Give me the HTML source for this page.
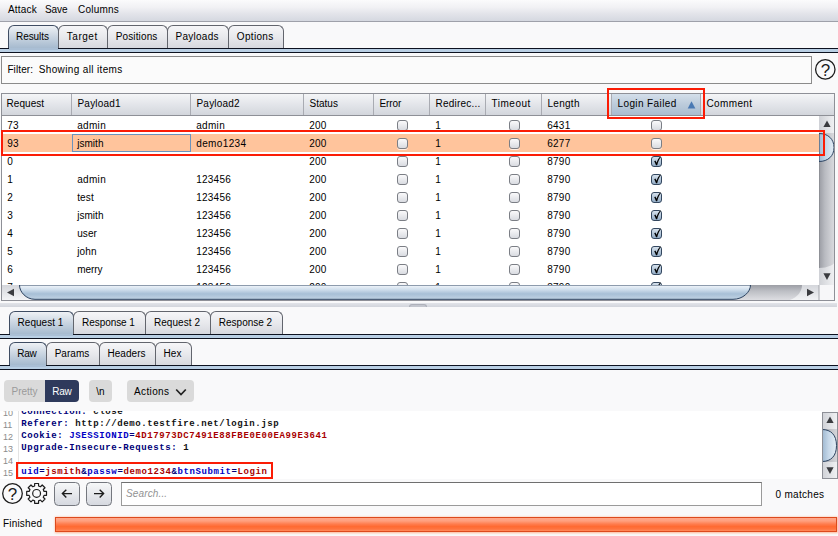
<!DOCTYPE html>
<html><head><meta charset="utf-8"><title>Intruder attack</title>
<style>
*{box-sizing:border-box;margin:0;padding:0}
html,body{width:838px;height:536px;overflow:hidden;background:#f9f9fa;font-family:"Liberation Sans",Arial,sans-serif;font-size:10px;color:#000}
body{position:relative}
.a{position:absolute}
#menubar{left:0;top:0;width:838px;height:22px;background:linear-gradient(#fbfbfc 0%,#f1f1f4 35%,#e3e4ea 65%,#d5d8e0 100%);border-bottom:1px solid #9fa1aa}
#menubar>span{position:absolute;top:4px}
.tab{position:absolute;height:24px;border:1px solid #62656d;border-bottom:none;border-radius:6px 6px 0 0;background:linear-gradient(#f6f6f8 0%,#e7e8ec 50%,#d5d7dd 100%);text-align:center;line-height:22px;white-space:nowrap;padding-right:2px}
.tab.sel{height:24px;background:linear-gradient(#eef1f5 0%,#cbd6e2 45%,#a3b8cd 100%);border-color:#3f4d63}
.tl{position:absolute;left:0;width:838px;height:5px;background:#b9cfe4;border-top:1px solid #0d1220;border-bottom:1px solid #0d1220}
#filter{left:1px;top:56px;width:811px;height:28px;border:1px solid #8b8b8b;background:#fbfbfb;line-height:26px;padding-left:5.4px}
#thead{left:1px;top:93px;width:834px;height:23px;border:1px solid #8e9097;background:linear-gradient(#f4f5f7 0%,#e3e5ea 50%,#d3d6dc 100%)}
.th{position:absolute;top:0;height:21px;line-height:20px;padding-left:5.5px;border-left:1px solid #a9abb2;white-space:nowrap;overflow:hidden}
.th.sorted{background:linear-gradient(#d4dfea 0%,#bccbdb 50%,#a9bcd0 100%)}
#tbody{left:1px;top:116px;width:834px;height:185px;border:1px solid #8e9097;border-top:none;background:#fff;overflow:hidden}
.tr{position:absolute;left:0;width:817px;height:18px;line-height:19px}
.tr.sel{background:#ffc49c}
.td{position:absolute;top:0;height:18px;white-space:nowrap}
.cb{position:absolute;top:4px;width:11px;height:11px;border:1px solid #7b7e85;border-radius:3px;background:linear-gradient(#fafafb,#d9dbe1);box-shadow:0 1px 0 rgba(255,255,255,.7)}
.cb.on{border-color:#33475f;background:linear-gradient(#d6e1ec,#93adc7)}
.cb.on svg{position:absolute;left:0;top:-1px}
.red{position:absolute;border:2.4px solid #fb1c05}
.ln{position:absolute;left:0;height:12px;line-height:12px;white-space:pre;font-family:"Liberation Mono","Courier New",monospace;font-size:10px}
.ln .no{position:absolute;left:3px;top:0.5px;color:#8c8c8c;font-size:9px;font-family:"Liberation Sans",Arial,sans-serif}
.ln .tx{position:absolute;left:21.3px;top:0.3px;font-size:9px;letter-spacing:0.6px;font-weight:bold;color:#111}
.ln b{font-weight:bold}
.ln b.n{color:#000078}.ln b.k{color:#0000c4}.ln b.v{color:#a80000}
</style></head><body>
<div id="menubar" class="a"><span style="left:8px"><span style="letter-spacing:0.188px">Attac</span>k</span><span style="left:45px"><span style="letter-spacing:-0.097px">Sav</span>e</span><span style="left:78px"><span style="letter-spacing:0.215px">Column</span>s</span></div>
<div class="tab sel" style="left:8px;top:25px;width:51px"><span style="letter-spacing:-0.073px">Result</span>s</div>
<div class="tab" style="left:58px;top:25px;width:50px"><span style="letter-spacing:0.542px">Targe</span>t</div>
<div class="tab" style="left:107px;top:25px;width:61px"><span style="letter-spacing:0.140px">Position</span>s</div>
<div class="tab" style="left:167px;top:25px;width:62px"><span style="letter-spacing:0.251px">Payload</span>s</div>
<div class="tab" style="left:228px;top:25px;width:56px"><span style="letter-spacing:0.307px">Option</span>s</div>
<div class="tl" style="top:48px"></div>
<div class="a" style="left:9px;top:48px;width:49px;height:2px;background:#aabfd5"></div>
<div id="filter" class="a"><span style="letter-spacing:0.117px">Filter</span>:&nbsp;&nbsp;<span style="letter-spacing:0.362px">Showing all item</span>s</div>
<svg class="a" style="left:813px;top:57px" width="25" height="25" viewBox="0 0 25 25"><circle cx="12.3" cy="12.4" r="9.7" fill="none" stroke="#1c1c1c" stroke-width="1.3"/><text x="12.4" y="18.7" text-anchor="middle" font-family="Liberation Sans,sans-serif" font-size="17" fill="#1c1c1c">?</text></svg>
<div id="thead" class="a">
<div class="th" style="border-left:none;left:-1px;width:70px"><span style="letter-spacing:0.058px">Reques</span>t</div>
<div class="th" style="left:69px;width:119px"><span style="letter-spacing:0.200px">Payload</span>1</div>
<div class="th" style="left:188px;width:113px"><span style="letter-spacing:0.200px">Payload</span>2</div>
<div class="th" style="left:301px;width:70px"><span style="letter-spacing:0.010px">Statu</span>s</div>
<div class="th" style="left:371px;width:56px"><span style="letter-spacing:-0.130px">Erro</span>r</div>
<div class="th" style="left:427px;width:56px"><span style="letter-spacing:0.223px">Redirec..</span>.</div>
<div class="th" style="left:483px;width:56px"><span style="letter-spacing:0.508px">Timeou</span>t</div>
<div class="th" style="left:539px;width:70px"><span style="letter-spacing:0.282px">Lengt</span>h</div>
<div class="th sorted" style="left:609px;width:89px"><span style="letter-spacing:0.393px">Login Faile</span>d</div>
<div class="th" style="left:698px;width:134px"><span style="letter-spacing:0.358px">Commen</span>t</div>
<svg class="a" style="left:685px;top:6px" width="12" height="10" viewBox="0 0 12 10"><path d="M4.5 1.2 L8.4 8.4 L0.7 8.4 Z" fill="#4a79b3"/></svg>
</div>
<div id="tbody" class="a">
<div class="tr" style="top:0px">
<span class="td" style="left:5.2px"><span style="letter-spacing:0.263px">7</span>3</span>
<span class="td" style="left:75.2px"><span style="letter-spacing:0.315px">admi</span>n</span>
<span class="td" style="left:194.2px"><span style="letter-spacing:0.315px">admi</span>n</span>
<span class="td" style="left:307.2px"><span style="letter-spacing:0.263px">20</span>0</span>
<span class="td" style="left:433.2px">1</span>
<span class="td" style="left:545.2px"><span style="letter-spacing:0.263px">643</span>1</span>
<span class="cb" style="left:394.8px"></span>
<span class="cb" style="left:506.79999999999995px"></span>
<span class="cb" style="left:649.1px"></span>
</div>
<div class="tr sel" style="top:18px">
<span class="td" style="left:5.2px"><span style="letter-spacing:0.263px">9</span>3</span>
<span class="td" style="left:75.2px"><span style="letter-spacing:0.028px">jsmit</span>h</span>
<span class="td" style="left:194.2px"><span style="letter-spacing:0.377px">demo123</span>4</span>
<span class="td" style="left:307.2px"><span style="letter-spacing:0.263px">20</span>0</span>
<span class="td" style="left:433.2px">1</span>
<span class="td" style="left:545.2px"><span style="letter-spacing:0.263px">627</span>7</span>
<span class="cb" style="left:394.8px"></span>
<span class="cb" style="left:506.79999999999995px"></span>
<span class="cb" style="left:649.1px"></span>
</div>
<div class="tr" style="top:36px">
<span class="td" style="left:5.2px">0</span>
<span class="td" style="left:307.2px"><span style="letter-spacing:0.263px">20</span>0</span>
<span class="td" style="left:433.2px">1</span>
<span class="td" style="left:545.2px"><span style="letter-spacing:0.263px">879</span>0</span>
<span class="cb" style="left:394.8px"></span>
<span class="cb" style="left:506.79999999999995px"></span>
<span class="cb on" style="left:649.1px"><svg width="11" height="11" viewBox="0 0 11 11"><path d="M2.2 5.2 L3.4 4.6 L4.6 6.8 C5.2 4.4 6.4 2.2 8.2 0.4 L8.8 0.8 C7.2 3.2 6 6 5.2 9.2 L4 9.2 C3.4 7.6 2.8 6.4 2.2 5.2 Z" fill="#000"/></svg></span>
</div>
<div class="tr" style="top:54px">
<span class="td" style="left:5.2px">1</span>
<span class="td" style="left:75.2px"><span style="letter-spacing:0.315px">admi</span>n</span>
<span class="td" style="left:194.2px"><span style="letter-spacing:0.246px">12345</span>6</span>
<span class="td" style="left:307.2px"><span style="letter-spacing:0.263px">20</span>0</span>
<span class="td" style="left:433.2px">1</span>
<span class="td" style="left:545.2px"><span style="letter-spacing:0.263px">879</span>0</span>
<span class="cb" style="left:394.8px"></span>
<span class="cb" style="left:506.79999999999995px"></span>
<span class="cb on" style="left:649.1px"><svg width="11" height="11" viewBox="0 0 11 11"><path d="M2.2 5.2 L3.4 4.6 L4.6 6.8 C5.2 4.4 6.4 2.2 8.2 0.4 L8.8 0.8 C7.2 3.2 6 6 5.2 9.2 L4 9.2 C3.4 7.6 2.8 6.4 2.2 5.2 Z" fill="#000"/></svg></span>
</div>
<div class="tr" style="top:72px">
<span class="td" style="left:5.2px">2</span>
<span class="td" style="left:75.2px"><span style="letter-spacing:0.132px">tes</span>t</span>
<span class="td" style="left:194.2px"><span style="letter-spacing:0.246px">12345</span>6</span>
<span class="td" style="left:307.2px"><span style="letter-spacing:0.263px">20</span>0</span>
<span class="td" style="left:433.2px">1</span>
<span class="td" style="left:545.2px"><span style="letter-spacing:0.263px">879</span>0</span>
<span class="cb" style="left:394.8px"></span>
<span class="cb" style="left:506.79999999999995px"></span>
<span class="cb on" style="left:649.1px"><svg width="11" height="11" viewBox="0 0 11 11"><path d="M2.2 5.2 L3.4 4.6 L4.6 6.8 C5.2 4.4 6.4 2.2 8.2 0.4 L8.8 0.8 C7.2 3.2 6 6 5.2 9.2 L4 9.2 C3.4 7.6 2.8 6.4 2.2 5.2 Z" fill="#000"/></svg></span>
</div>
<div class="tr" style="top:90px">
<span class="td" style="left:5.2px">3</span>
<span class="td" style="left:75.2px"><span style="letter-spacing:0.028px">jsmit</span>h</span>
<span class="td" style="left:194.2px"><span style="letter-spacing:0.246px">12345</span>6</span>
<span class="td" style="left:307.2px"><span style="letter-spacing:0.263px">20</span>0</span>
<span class="td" style="left:433.2px">1</span>
<span class="td" style="left:545.2px"><span style="letter-spacing:0.263px">879</span>0</span>
<span class="cb" style="left:394.8px"></span>
<span class="cb" style="left:506.79999999999995px"></span>
<span class="cb on" style="left:649.1px"><svg width="11" height="11" viewBox="0 0 11 11"><path d="M2.2 5.2 L3.4 4.6 L4.6 6.8 C5.2 4.4 6.4 2.2 8.2 0.4 L8.8 0.8 C7.2 3.2 6 6 5.2 9.2 L4 9.2 C3.4 7.6 2.8 6.4 2.2 5.2 Z" fill="#000"/></svg></span>
</div>
<div class="tr" style="top:108px">
<span class="td" style="left:5.2px">4</span>
<span class="td" style="left:75.2px"><span style="letter-spacing:0.082px">use</span>r</span>
<span class="td" style="left:194.2px"><span style="letter-spacing:0.246px">12345</span>6</span>
<span class="td" style="left:307.2px"><span style="letter-spacing:0.263px">20</span>0</span>
<span class="td" style="left:433.2px">1</span>
<span class="td" style="left:545.2px"><span style="letter-spacing:0.263px">879</span>0</span>
<span class="cb" style="left:394.8px"></span>
<span class="cb" style="left:506.79999999999995px"></span>
<span class="cb on" style="left:649.1px"><svg width="11" height="11" viewBox="0 0 11 11"><path d="M2.2 5.2 L3.4 4.6 L4.6 6.8 C5.2 4.4 6.4 2.2 8.2 0.4 L8.8 0.8 C7.2 3.2 6 6 5.2 9.2 L4 9.2 C3.4 7.6 2.8 6.4 2.2 5.2 Z" fill="#000"/></svg></span>
</div>
<div class="tr" style="top:126px">
<span class="td" style="left:5.2px">5</span>
<span class="td" style="left:75.2px"><span style="letter-spacing:0.164px">joh</span>n</span>
<span class="td" style="left:194.2px"><span style="letter-spacing:0.246px">12345</span>6</span>
<span class="td" style="left:307.2px"><span style="letter-spacing:0.263px">20</span>0</span>
<span class="td" style="left:433.2px">1</span>
<span class="td" style="left:545.2px"><span style="letter-spacing:0.263px">879</span>0</span>
<span class="cb" style="left:394.8px"></span>
<span class="cb" style="left:506.79999999999995px"></span>
<span class="cb on" style="left:649.1px"><svg width="11" height="11" viewBox="0 0 11 11"><path d="M2.2 5.2 L3.4 4.6 L4.6 6.8 C5.2 4.4 6.4 2.2 8.2 0.4 L8.8 0.8 C7.2 3.2 6 6 5.2 9.2 L4 9.2 C3.4 7.6 2.8 6.4 2.2 5.2 Z" fill="#000"/></svg></span>
</div>
<div class="tr" style="top:144px">
<span class="td" style="left:5.2px">6</span>
<span class="td" style="left:75.2px"><span style="letter-spacing:-0.066px">merr</span>y</span>
<span class="td" style="left:194.2px"><span style="letter-spacing:0.246px">12345</span>6</span>
<span class="td" style="left:307.2px"><span style="letter-spacing:0.263px">20</span>0</span>
<span class="td" style="left:433.2px">1</span>
<span class="td" style="left:545.2px"><span style="letter-spacing:0.263px">879</span>0</span>
<span class="cb" style="left:394.8px"></span>
<span class="cb" style="left:506.79999999999995px"></span>
<span class="cb on" style="left:649.1px"><svg width="11" height="11" viewBox="0 0 11 11"><path d="M2.2 5.2 L3.4 4.6 L4.6 6.8 C5.2 4.4 6.4 2.2 8.2 0.4 L8.8 0.8 C7.2 3.2 6 6 5.2 9.2 L4 9.2 C3.4 7.6 2.8 6.4 2.2 5.2 Z" fill="#000"/></svg></span>
</div>
<div class="tr" style="top:162px">
<span class="td" style="left:5.2px">7</span>
<span class="td" style="left:194.2px"><span style="letter-spacing:0.246px">12345</span>6</span>
<span class="td" style="left:307.2px"><span style="letter-spacing:0.263px">20</span>0</span>
<span class="td" style="left:433.2px">1</span>
<span class="td" style="left:545.2px"><span style="letter-spacing:0.263px">879</span>0</span>
<span class="cb" style="left:394.8px"></span>
<span class="cb" style="left:506.79999999999995px"></span>
<span class="cb on" style="left:649.1px"><svg width="11" height="11" viewBox="0 0 11 11"><path d="M2.2 5.2 L3.4 4.6 L4.6 6.8 C5.2 4.4 6.4 2.2 8.2 0.4 L8.8 0.8 C7.2 3.2 6 6 5.2 9.2 L4 9.2 C3.4 7.6 2.8 6.4 2.2 5.2 Z" fill="#000"/></svg></span>
</div>
</div>

<div class="a" id="vsb" style="left:819px;top:116px;width:15px;height:169px;background:linear-gradient(90deg,#9fa1a8 0%,#b9bbc1 35%,#d9dade 100%);border-left:1px solid #8f9197"></div>
<svg class="a" style="left:819px;top:116px" width="15" height="169" viewBox="0 0 15 169" preserveAspectRatio="none">
 <defs>
  <linearGradient id="btnv" x1="0" x2="1" y1="0" y2="0"><stop offset="0" stop-color="#cfd1d6"/><stop offset="1" stop-color="#f2f3f5"/></linearGradient>
  <linearGradient id="thv" x1="0" x2="1" y1="0" y2="0"><stop offset="0" stop-color="#9db7d0"/><stop offset=".45" stop-color="#c5d7e8"/><stop offset="1" stop-color="#e4eef6"/></linearGradient>
 </defs>
 <path d="M0 0 H16 V17 H0 Z" fill="url(#btnv)"/>
 <path d="M8 4.5 L11.6 11 L4.4 11 Z" fill="#3a3b3f"/>
 <path d="M0 169 H16 V144.5 A16 7.5 0 0 1 0 152 Z" fill="url(#btnv)"/>
 <path d="M8 164 L11.6 157.2 L4.4 157.2 Z" fill="#3a3b3f"/>
 <path d="M0 17.5 C9 17.5 15 23 15 31.5 C15 40 9 45.5 0 45.5 Z" fill="url(#thv)" stroke="#2c4361" stroke-width="1"/>
</svg>
<div class="a" id="hsb" style="left:2px;top:285px;width:817px;height:15px;background:linear-gradient(#9c9ea5 0%,#bcbec4 40%,#dddee2 100%)"></div>
<svg class="a" style="left:2px;top:285px" width="833" height="15" viewBox="0 0 833 15">
 <defs>
  <linearGradient id="btnh" x1="0" x2="0" y1="0" y2="1"><stop offset="0" stop-color="#d4d6db"/><stop offset="1" stop-color="#f3f4f6"/></linearGradient>
  <linearGradient id="thh" x1="0" x2="0" y1="0" y2="1"><stop offset="0" stop-color="#f3f7fb"/><stop offset=".32" stop-color="#cfdeec"/><stop offset=".62" stop-color="#a7bfd6"/><stop offset="1" stop-color="#c0d3e4"/></linearGradient>
 </defs>
 <path d="M0 0 H17 C17 6 22 12 30 15 H0 Z" fill="url(#btnh)"/>
 <path d="M5 7.5 L12 3.8 L12 11.2 Z" fill="#3a3b3f"/>
 <path d="M817 0 H800 C800 6 796 12 788 15 H817 Z" fill="url(#btnh)"/>
 <path d="M812 7.5 L805 3.8 L805 11.2 Z" fill="#3a3b3f"/>
 <path d="M17.5 0 C17.5 7 24 14.3 33 14.3 H731 C741 14.3 748.5 7 748.5 0 Z" fill="url(#thh)" stroke="#2c4361" stroke-width="1"/>
 <rect x="817" y="0" width="15" height="15" fill="#f7f7f9"/>
 <path d="M817 0 V15" stroke="#a5a7ad" stroke-width="1"/>
</svg>
<div class="a" style="left:0;top:303px;width:837px;height:4px;background:linear-gradient(#e2e4e9,#d2d5dc)"></div>
<div class="a" style="left:409px;top:303.5px;width:18px;height:3.5px;background:#c3c6ce;border:1px solid #aeb1ba;border-bottom:none;border-radius:3px 3px 0 0"></div>

<div class="red" style="left:607px;top:87.5px;width:98px;height:31px"></div>
<div class="red" style="left:1px;top:130px;width:824px;height:25.6px"></div>
<div class="a" style="left:72px;top:134px;width:119px;height:18px;border:1px solid #6b93bd"></div>
<div class="tab sel" style="left:9px;top:311px;width:65px"><span style="letter-spacing:0.026px">Request </span>1</div>
<div class="tab" style="left:73px;top:311px;width:73px"><span style="letter-spacing:-0.063px">Response </span>1</div>
<div class="tab" style="left:145px;top:311px;width:66px"><span style="letter-spacing:0.076px">Request </span>2</div>
<div class="tab" style="left:210px;top:311px;width:73px"><span style="letter-spacing:-0.008px">Response </span>2</div>
<div class="tl" style="top:334px"></div>
<div class="a" style="left:10px;top:334px;width:63px;height:2px;background:#aabfd5"></div>
<div class="tab sel" style="left:9px;top:342px;width:38px"><span style="letter-spacing:-0.215px">Ra</span>w</div>
<div class="tab" style="left:46px;top:342px;width:54px"><span style="letter-spacing:0.050px">Param</span>s</div>
<div class="tab" style="left:99px;top:342px;width:57px"><span style="letter-spacing:0.033px">Header</span>s</div>
<div class="tab" style="left:155px;top:342px;width:37px"><span style="letter-spacing:0.043px">He</span>x</div>
<div class="tl" style="top:365px"></div>
<div class="a" style="left:10px;top:365px;width:36px;height:2px;background:#aabfd5"></div>

<div class="a" style="left:4px;top:380px;width:41px;height:22px;background:#dadada;border-radius:4px 0 0 4px;color:#9a9a9a;text-align:center;line-height:23.5px"><span style="letter-spacing:-0.024px">Prett</span>y</div>
<div class="a" style="left:45px;top:380px;width:34px;height:22px;background:#2e3a5c;border-radius:0 4px 4px 0;color:#fff;text-align:center;line-height:23.5px"><span style="letter-spacing:-0.215px">Ra</span>w</div>
<div class="a" style="left:89px;top:380px;width:23px;height:22px;background:#dadada;border-radius:4px;text-align:center;line-height:23.5px">\n</div>
<div class="a" style="left:127px;top:380px;width:67px;height:22px;background:#dadada;border-radius:4px;line-height:23.5px;padding-left:7px"><span style="letter-spacing:0.368px">Action</span>s<svg class="a" style="left:48px;top:7.5px" width="12" height="9" viewBox="0 0 12 9"><path d="M1.2 1.5 L6 6.6 L10.8 1.5" fill="none" stroke="#222" stroke-width="1.7"/></svg></div>

<div class="a" id="ed" style="left:0;top:411px;width:822px;height:68px;background:#fff;overflow:hidden">
<div class="a" style="left:18px;top:0;width:1px;height:68px;background:#e4e4e4"></div>
<div class="ln" style="top:-5px"><span class="no">10</span><span class="tx"><b class="n">Connection:</b> close</span></div>
<div class="ln" style="top:7px"><span class="no">11</span><span class="tx"><b class="n">Referer:</b> http://demo.testfire.net/login.jsp</span></div>
<div class="ln" style="top:19px"><span class="no">12</span><span class="tx"><b class="n">Cookie:</b> <b class="k">JSESSIONID</b><b class="n">=</b><b class="v">4D17973DC7491E88FBE0E00EA99E3641</b></span></div>
<div class="ln" style="top:31px"><span class="no">13</span><span class="tx"><b class="n">Upgrade-Insecure-Requests:</b> 1</span></div>
<div class="ln" style="top:43px"><span class="no">14</span><span class="tx"></span></div>
<div class="ln" style="top:55px"><span class="no">15</span><span class="tx"><b class="k">uid</b><b class="n">=</b><b class="v">jsmith</b><b class="n">&amp;</b><b class="k">passw</b><b class="n">=</b><b class="v">demo1234</b><b class="n">&amp;</b><b class="k">btnSubmit</b><b class="n">=</b><b class="v">Login</b></span></div>
</div>
<div class="red" style="left:16px;top:462px;width:257px;height:17px;border-width:2.3px"></div>

<div class="a" style="left:822px;top:412px;width:16px;height:67px;background:linear-gradient(90deg,#9fa1a8 0%,#b9bbc1 35%,#d9dade 100%);border-left:1px solid #8f9197"></div>
<svg class="a" style="left:822px;top:412px" width="16" height="67" viewBox="0 0 16 67">
 <path d="M0 0 H16 V17 H0 Z" fill="url(#btnv)"/>
 <path d="M8 4.5 L11.6 11 L4.4 11 Z" fill="#3a3b3f"/>
 <path d="M0 67 H16 V50 H0 Z" fill="url(#btnv)"/>
 <path d="M8 62 L11.6 55.2 L4.4 55.2 Z" fill="#3a3b3f"/>
 <path d="M0 17.5 C9 17.5 14.5 23 14.5 33.5 C14.5 44 9 49.5 0 49.5 Z" fill="url(#thv)" stroke="#2c4361" stroke-width="1"/>
 <rect x="0.5" y="0.5" width="15" height="66" fill="none" stroke="#8e9097"/>
</svg>


<svg class="a" style="left:0;top:480px" width="120" height="28" viewBox="0 0 120 28">
 <circle cx="12.5" cy="13.5" r="9.8" fill="none" stroke="#1c1c1c" stroke-width="1.3"/>
 <text x="12.6" y="19.6" text-anchor="middle" font-family="Liberation Sans,sans-serif" font-size="17" fill="#1c1c1c">?</text>
 <g transform="translate(36.6,13.4)" fill="none" stroke="#1c1c1c" stroke-width="1.2" stroke-linejoin="round">
  <circle r="3.9"/>
  <path d="M-1.97 -7.44 L-1.97 -9.91 L1.97 -9.91 L1.97 -7.44 L3.87 -6.66 L5.61 -8.40 L8.40 -5.61 L6.66 -3.87 L7.44 -1.97 L9.91 -1.97 L9.91 1.97 L7.44 1.97 L6.66 3.87 L8.40 5.61 L5.61 8.40 L3.87 6.66 L1.97 7.44 L1.97 9.91 L-1.97 9.91 L-1.97 7.44 L-3.87 6.66 L-5.61 8.40 L-8.40 5.61 L-6.66 3.87 L-7.44 1.97 L-9.91 1.97 L-9.91 -1.97 L-7.44 -1.97 L-6.66 -3.87 L-8.40 -5.61 L-5.61 -8.40 L-3.87 -6.66 Z"/>
 </g>
 <defs><linearGradient id="bb" x1="0" x2="0" y1="0" y2="1"><stop offset="0" stop-color="#f7f8f9"/><stop offset=".5" stop-color="#e6e8ec"/><stop offset="1" stop-color="#d5d8df"/></linearGradient></defs>
 <rect x="54.5" y="2.5" width="25" height="23" rx="4" fill="url(#bb)" stroke="#74777e"/>
 <rect x="86.5" y="2.5" width="25" height="23" rx="4" fill="url(#bb)" stroke="#74777e"/>
 <path d="M72 13.6 H62.6 M66.3 9.7 L62.4 13.6 L66.3 17.5" fill="none" stroke="#1c1c1c" stroke-width="1.4"/>
 <path d="M94 13.6 H103.4 M99.7 9.7 L103.6 13.6 L99.7 17.5" fill="none" stroke="#1c1c1c" stroke-width="1.4"/>
</svg>
<div class="a" style="left:121px;top:482px;width:641px;height:24px;background:#fff;border:1px solid #9a9a9a;border-top-color:#6f6f6f;line-height:22px;padding-left:4px;color:#929292;font-style:italic"><span style="letter-spacing:0.132px">Search..</span>.</div>
<div class="a" style="left:775.5px;top:488.5px"><span style="letter-spacing:0.309px">0 matche</span>s</div>
<div class="a" style="left:3px;top:518px"><span style="letter-spacing:0.171px">Finishe</span>d</div>
<div class="a" style="left:54.5px;top:516.5px;width:782px;height:15.5px;border:1px solid #dc4a1d;box-shadow:0 0 2px 0.5px #ffb494;background:linear-gradient(#ffa88a 0%,#ffa180 22%,#ff7b4c 48%,#ff6a32 66%,#ff7440 85%,#ff8a5c 100%)"></div>

</body></html>
